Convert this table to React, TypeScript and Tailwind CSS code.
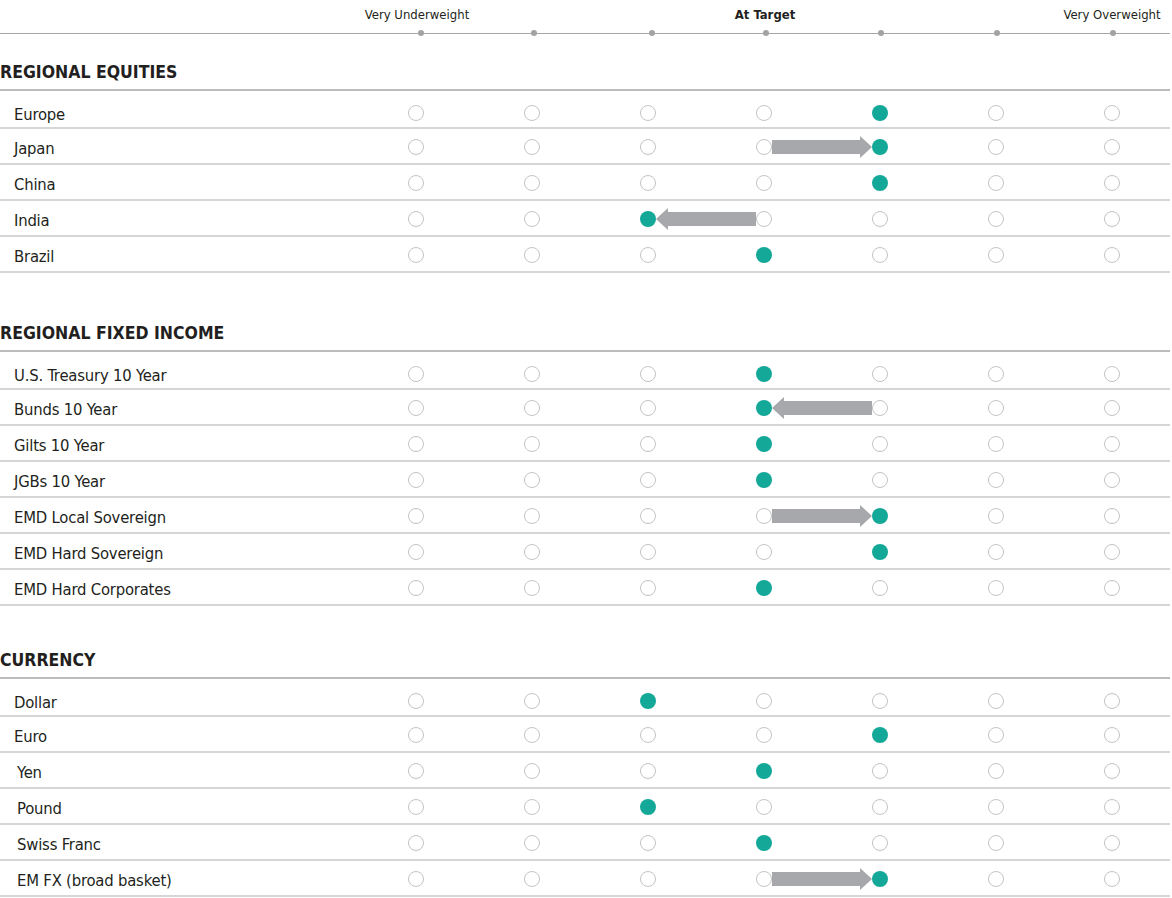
import React from 'react'

interface Row {
  label: string
  pos: number
  from?: number
  indent?: boolean
}

interface Section {
  title: string
  mt: string
  rows: Row[]
}

const COL = 116

const sections: Section[] = [
  {
    title: 'REGIONAL EQUITIES',
    mt: 'mt-[17px]',
    rows: [
      { label: 'Europe', pos: 4 },
      { label: 'Japan', pos: 4, from: 3 },
      { label: 'China', pos: 4 },
      { label: 'India', pos: 2, from: 3 },
      { label: 'Brazil', pos: 3 },
    ],
  },
  {
    title: 'REGIONAL FIXED INCOME',
    mt: 'mt-[41px]',
    rows: [
      { label: 'U.S. Treasury 10 Year', pos: 3 },
      { label: 'Bunds 10 Year', pos: 3, from: 4 },
      { label: 'Gilts 10 Year', pos: 3 },
      { label: 'JGBs 10 Year', pos: 3 },
      { label: 'EMD Local Sovereign', pos: 4, from: 3 },
      { label: 'EMD Hard Sovereign', pos: 4 },
      { label: 'EMD Hard Corporates', pos: 3 },
    ],
  },
  {
    title: 'CURRENCY',
    mt: 'mt-[35px]',
    rows: [
      { label: 'Dollar', pos: 2 },
      { label: 'Euro', pos: 4 },
      { label: 'Yen', pos: 3, indent: true },
      { label: 'Pound', pos: 2, indent: true },
      { label: 'Swiss Franc', pos: 3, indent: true },
      { label: 'EM FX (broad basket)', pos: 4, from: 3, indent: true },
    ],
  },
]

const headerLabels: Record<number, { text: string; bold?: boolean; shift: string }> = {
  0: { text: 'Very Underweight', shift: 'translate-x-[1px]' },
  3: { text: 'At Target', bold: true, shift: 'translate-x-[1px]' },
  6: { text: 'Very Overweight', shift: 'translate-x-[0px]' },
}

// the scale ticks sit a touch right of the column centres
const dotShift = [
  'translate-x-[5px]',
  'translate-x-[2px]',
  'translate-x-[4px]',
  'translate-x-[2px]',
  'translate-x-[1px]',
  'translate-x-[1px]',
  'translate-x-[1px]',
]

function Arrow({ from, to }: { from: number; to: number }) {
  const right = to > from
  const w = Math.abs(to - from) * COL - 16
  const left = right ? 58 + from * COL + 8 : 58 + to * COL + 8
  const points = right
    ? `0,4 ${w - 12},4 ${w - 12},0 ${w},11 ${w - 12},22 ${w - 12},18 0,18`
    : `${w},4 12,4 12,0 0,11 12,22 12,18 ${w},18`
  return (
    <svg
      width={w}
      height={22}
      viewBox={`0 0 ${w} 22`}
      className="absolute top-1/2 -translate-y-1/2"
      style={{ left }}
    >
      <polygon points={points} fill="#a7a8ab" />
    </svg>
  )
}

function DataRow({ row, first }: { row: Row; first: boolean }) {
  return (
    <div
      className={`flex items-center border-b-2 border-[#d6d6d6] ${
        first ? 'h-[38px] pt-[6px]' : 'h-[36px]'
      }`}
    >
      <div
        className={`w-[358px] shrink-0 text-[16.5px] tracking-[-0.2px] leading-none text-[#231f20] pt-[7px] ${
          row.indent ? 'pl-[17px]' : 'pl-[14px]'
        }`}
      >
        {row.label}
      </div>
      <div className="relative grid grid-cols-[repeat(7,116px)] h-[18px] items-center translate-y-[1px]">
        {row.from !== undefined && <Arrow from={row.from} to={row.pos} />}
        {Array.from({ length: 7 }).map((_, i) => (
          <div key={i} className="flex justify-center">
            {i === row.pos ? (
              <div className="relative z-10 w-[16px] h-[16px] rounded-full bg-[#13a898]" />
            ) : (
              <div className="relative z-10 w-[16px] h-[16px] rounded-full bg-white border-[1.5px] border-[#c4c4c4]" />
            )}
          </div>
        ))}
      </div>
    </div>
  )
}

export default function App() {
  return (
    <div
      className="w-[1172px] h-[898px] bg-white overflow-hidden"
      style={{ fontFamily: '"Liberation Sans Narrow", "DejaVu Sans Condensed", "Liberation Sans", sans-serif' }}
    >
      {/* Scale header */}
      <div className="w-[1170px]">
        <div className="grid grid-cols-[358px_repeat(7,116px)] h-[34px] pt-[8px] border-b-[1.5px] border-[#a6a6a6]">
          <div />
          {Array.from({ length: 7 }).map((_, i) => (
            <div key={i} className="flex justify-center">
              {headerLabels[i] && (
                <span
                  className={`whitespace-nowrap text-[13px] leading-none text-[#231f20] ${
                    headerLabels[i].bold ? 'font-bold' : ''
                  } ${headerLabels[i].shift}`}
                >
                  {headerLabels[i].text}
                </span>
              )}
            </div>
          ))}
        </div>
        <div className="grid grid-cols-[358px_repeat(7,116px)] h-[6px] -mt-[4px]">
          <div />
          {Array.from({ length: 7 }).map((_, i) => (
            <div key={i} className="flex justify-center">
              <div className={`w-[6px] h-[6px] rounded-full bg-[#a3a3a3] ${dotShift[i]}`} />
            </div>
          ))}
        </div>
      </div>

      {sections.map((section) => (
        <div key={section.title} className={`w-[1170px] ${section.mt}`}>
          <div className="h-[38px] flex items-end pb-[8px] border-b-2 border-[#bcbcbc]">
            <span className="text-[17.5px] leading-none font-bold text-[#231f20]">
              {section.title}
            </span>
          </div>
          {section.rows.map((row, i) => (
            <DataRow key={row.label} row={row} first={i === 0} />
          ))}
        </div>
      ))}
    </div>
  )
}
